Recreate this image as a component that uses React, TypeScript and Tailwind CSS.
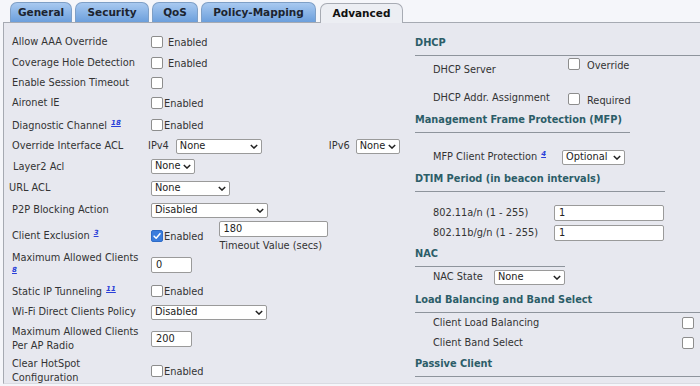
import type { ReactNode } from 'react'

const TABS = [
  { label: 'General', w: 'w-[62px]' },
  { label: 'Security', w: 'w-[74px]' },
  { label: 'QoS', w: 'w-[46px]' },
  { label: 'Policy-Mapping', w: 'w-[115px]' },
]

function Check({ checked = false }: { checked?: boolean }) {
  if (checked) {
    return (
      <span className="inline-flex w-[12px] h-[12px] shrink-0 items-center justify-center rounded-[2px] bg-[#3b7ddd] border border-[#2f6cc7]">
        <svg viewBox="0 0 12 12" className="w-[10px] h-[10px]">
          <path d="M2.5 6.2 L5 8.6 L9.6 3.2" fill="none" stroke="white" strokeWidth="1.8" strokeLinecap="round" strokeLinejoin="round" />
        </svg>
      </span>
    )
  }
  return <span className="inline-block w-[12px] h-[12px] shrink-0 rounded-[2px] bg-white border border-[#8d8d8d]" />
}

function Select({ value, className }: { value: string; className: string }) {
  return (
    <div className={`flex items-center justify-between h-[15px] bg-white border border-[#9a9a9a] rounded-[2px] pl-[3px] pr-[3px] text-[#222] ${className}`}>
      <span>{value}</span>
      <svg viewBox="0 0 10 6" className="w-[8px] h-[5px] shrink-0">
        <path d="M1 1 L5 5 L9 1" fill="none" stroke="#222" strokeWidth="1.8" />
      </svg>
    </div>
  )
}

function Input({ value, className }: { value: string; className: string }) {
  return (
    <div className={`flex items-center h-[16px] bg-white border border-[#9a9a9a] rounded-[2px] px-[4px] text-[#222] ${className}`}>
      {value}
    </div>
  )
}

function Note({ n }: { n: string }) {
  return <a className="ml-[4px] align-super text-[7px] font-bold italic underline text-[#2a3fd8]">{n}</a>
}

function Enabled({ checked = false, gap = false }: { checked?: boolean; gap?: boolean }) {
  return (
    <div className="flex items-center">
      <Check checked={checked} />
      <span className={gap ? 'ml-[5px] mt-[3px]' : 'ml-[1px] mt-[3px]'}>Enabled</span>
    </div>
  )
}

function Row({ label, h, children, pl = 'pl-[8px]' }: { label: ReactNode; h: string; children?: ReactNode; pl?: string }) {
  return (
    <div className={`flex items-center ${h}`}>
      <div className={`w-[147px] shrink-0 ${pl} leading-[14px]`}>{label}</div>
      <div className="flex items-center">{children}</div>
    </div>
  )
}

function Head({ text, w, h }: { text: string; w: string; h: string }) {
  return (
    <div className={`flex items-end ${h} ${w} border-b-[1.5px] border-[#8e949c] pb-[4px] font-bold text-[#2c5d68]`}>
      {text}
    </div>
  )
}

export default function App() {
  return (
    <div className="w-[700px] h-[386px] overflow-hidden bg-[#f5f6fa] font-['DejaVu_Sans',sans-serif] text-[9.8px] text-[#333]">
      <div className="flex items-end h-[22px] pl-[10px] gap-[3px]">
        {TABS.map((t) => (
          <div
            key={t.label}
            className={`${t.w} h-[20px] flex items-center justify-center rounded-t-[7px] border border-b-0 border-[#7e9fc6] bg-gradient-to-b from-[#a8c9f0] to-[#6c9fdc] text-[10.5px] font-bold text-[#1c2430]`}
          >
            {t.label}
          </div>
        ))}
        <div className="w-[83px] h-[20px] ml-[1px] flex items-center justify-center rounded-t-[7px] border border-b-0 border-[#a7abb3] bg-[#eceef3] text-[10.5px] font-bold text-[#111] relative top-[1px]">
          Advanced
        </div>
      </div>

      <div className="ml-[3px] h-[362px] border-t border-l border-b border-[#a6aab2] border-b-[#d9dbe2] bg-[#e7e8ef] flex">
        <div className="w-[405px] shrink-0 pt-[9px]">
          <Row label="Allow AAA Override" h="h-[20px]"><Enabled gap /></Row>
          <Row label="Coverage Hole Detection" h="h-[21px]"><Enabled gap /></Row>
          <Row label="Enable Session Timeout" h="h-[19px]"><Check /></Row>
          <Row label="Aironet IE" h="h-[22px]"><Enabled /></Row>
          <Row label={<>Diagnostic Channel<Note n="18" /></>} h="h-[22px]"><Enabled /></Row>
          <Row label="Override Interface ACL" h="h-[20px]">
            <span className="-ml-[3px] mr-[7px]">IPv4</span>
            <Select value="None" className="w-[86px]" />
            <span className="ml-[67px] mr-[6px]">IPv6</span>
            <Select value="None" className="w-[44px]" />
          </Row>
          <Row label="Layer2 Acl" h="h-[21px]" pl="pl-[9px]"><Select value="None" className="w-[44px]" /></Row>
          <Row label="URL ACL" h="h-[22px]" pl="pl-[5px]"><Select value="None" className="w-[79px]" /></Row>
          <Row label="P2P Blocking Action" h="h-[22px]"><Select value="Disabled" className="w-[117px]" /></Row>
          <div className="flex h-[29px]">
            <div className="w-[147px] shrink-0 pl-[8px] pt-[7px]">Client Exclusion<Note n="3" /></div>
            <div className="flex items-start">
              <div className="pt-[6px]"><Enabled checked /></div>
              <div className="ml-[15px]">
                <Input value="180" className="w-[109px]" />
                <div className="mt-[2px] ml-[1px]">Timeout Value (secs)</div>
              </div>
            </div>
          </div>
          <div className="flex h-[30px] items-start">
            <div className="w-[147px] shrink-0 pl-[8px] pt-[2px] leading-[11px]">
              Maximum Allowed Clients
              <div><a className="text-[7px] font-bold italic underline text-[#2a3fd8]">8</a></div>
            </div>
            <Input value="0" className="w-[41px] mt-[7px]" />
          </div>
          <Row label={<>Static IP Tunneling<Note n="11" /></>} h="h-[22px]"><Enabled /></Row>
          <Row label="Wi-Fi Direct Clients Policy" h="h-[20px]"><Select value="Disabled" className="w-[116px]" /></Row>
          <div className="flex h-[34px] items-center">
            <div className="w-[147px] shrink-0 pl-[8px] leading-[14px]">Maximum Allowed Clients<br />Per AP Radio</div>
            <Input value="200" className="w-[41px]" />
          </div>
          <div className="flex h-[30px] items-center">
            <div className="w-[147px] shrink-0 pl-[8px] leading-[14px]">Clear HotSpot<br />Configuration</div>
            <Enabled />
          </div>
        </div>

        <div className="flex-1 pl-[6px]">
          <Head text="DHCP" h="h-[33px]" w="w-full" />
          <div className="flex h-[28px]">
            <div className="w-[153px] pl-[18px] pt-[7px]">DHCP Server</div>
            <div className="flex items-start pt-[2px]">
              <Check />
              <span className="ml-[7px] mt-[1px]">Override</span>
            </div>
          </div>
          <div className="flex h-[29px] items-center">
            <div className="w-[153px] pl-[18px]">DHCP Addr. Assignment</div>
            <Check />
            <span className="ml-[7px] mt-[5px]">Required</span>
          </div>
          <Head text="Management Frame Protection (MFP)" h="h-[20px]" w="w-[215px]" />
          <div className="flex h-[36px] items-center pt-[12px]">
            <div className="w-[147px] pl-[18px]">MFP Client Protection<Note n="4" /></div>
            <Select value="Optional" className="w-[63px]" />
          </div>
          <Head text="DTIM Period (in beacon intervals)" h="h-[23px]" w="w-[250px]" />
          <div className="flex h-[20px] items-center mt-[11px]">
            <div className="w-[139px] pl-[18px]">802.11a/n (1 - 255)</div>
            <Input value="1" className="w-[110px]" />
          </div>
          <div className="flex h-[20px] items-center">
            <div className="w-[139px] pl-[18px]">802.11b/g/n (1 - 255)</div>
            <Input value="1" className="w-[110px]" />
          </div>
          <Head text="NAC" h="h-[24px]" w="w-[150px]" />
          <div className="flex h-[21px] items-center">
            <div className="w-[79px] pl-[18px]">NAC State</div>
            <Select value="None" className="w-[71px]" />
          </div>
          <Head text="Load Balancing and Band Select" h="h-[25px]" w="w-full" />
          <div className="flex h-[20px] items-center justify-between pr-[6px]">
            <div className="pl-[18px]">Client Load Balancing</div>
            <Check />
          </div>
          <div className="flex h-[20px] items-center justify-between pr-[6px]">
            <div className="pl-[18px]">Client Band Select</div>
            <Check />
          </div>
          <Head text="Passive Client" h="h-[24px]" w="w-full" />
        </div>
      </div>
    </div>
  )
}
